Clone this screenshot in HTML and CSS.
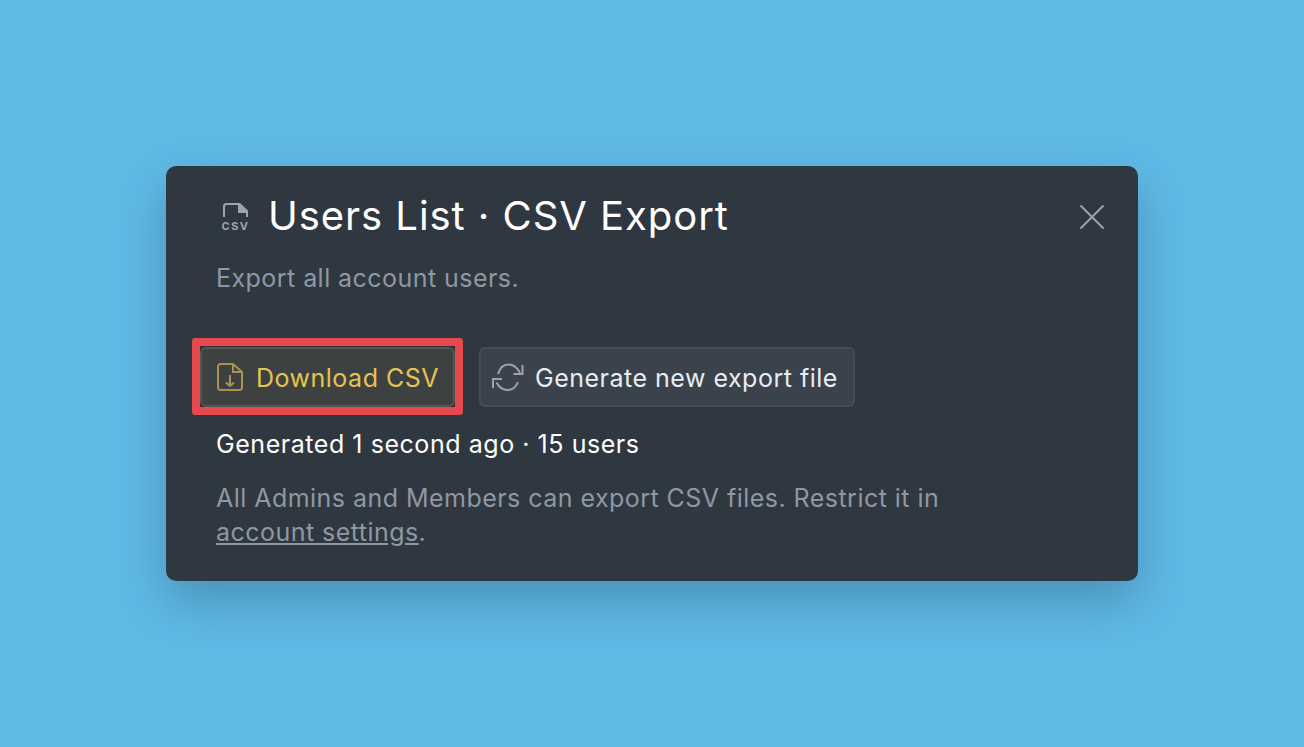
FILE: index.html
```html
<!DOCTYPE html>
<html lang="en">
<head>
    <meta charset="UTF-8">
    <meta name="viewport" content="width=device-width, initial-scale=1.0">
    <title>Users List CSV Export</title>
    <link rel="stylesheet" href="styles.css">
</head>
<body>
    <div class="modal">
        <div class="modal-header">
            <svg class="csv-icon" width="30" height="32" viewBox="0 0 30 32" fill="none">
                <path d="M4 17V6.500A2.500 2.500 0 0 1 6.500 4H19M27 12v5" stroke="#9ca3af" stroke-width="2"/>
                <path d="M18 3h2l8 7.500V13H18z" fill="#9ca3af"/>
                <text x="15.500" y="30" class="csv-label" text-anchor="middle">CSV</text>
            </svg>
            <h2>Users List · CSV Export</h2>
            <svg class="close-icon" width="26" height="26" viewBox="0 0 26 26" fill="none">
                <path d="M1.500 1.500l23 23M24.500 1.500l-23 23" stroke="#9ca3af" stroke-width="2"/>
            </svg>
        </div>
        <p class="subtitle">Export all account users.</p>

        <div class="actions">
            <div class="highlight">
                <button class="btn btn-download">
                    <svg width="28" height="30" viewBox="0 0 28 30" fill="none" stroke="currentColor" stroke-width="2">
                        <path d="M16 2H3.500A2.500 2.500 0 0 0 1 4.500v21A2.500 2.500 0 0 0 3.500 28h19a2.500 2.500 0 0 0 2.500-2.500V10z"/>
                        <path d="M16 2v8h9"/>
                        <path d="M13 13v11M9 20.500l4 3.500 4-3.500"/>
                    </svg>
                    <span class="btn-label">Download CSV</span>
                </button>
            </div>
            <button class="btn btn-generate">
                <svg width="34" height="30" viewBox="0 0 34 30" fill="none" stroke="#9ca3af" stroke-width="2">
                    <path d="M7 12C9 5 13 2.500 17.500 2.500 22 2.500 26 5 29 11"/>
                    <path d="M31.500 3v9h-9"/>
                    <path d="M27 20c-2 5-6 8-10.500 8-4.500 0-8.500-3-11-7.500"/>
                    <path d="M2 26v-9h9"/>
                </svg>
                <span class="btn-label">Generate new export file</span>
            </button>
        </div>

        <p class="status">Generated 1 second ago · 15 users</p>
        <p class="note">All Admins and Members can export CSV files. Restrict it in<br><a href="#">account settings</a>.</p>
    </div>
</body>
</html>
```

FILE: styles.css
```css
* {
    box-sizing: border-box;
}
body {
    font-family: Inter, "Liberation Sans", sans-serif;
    background-color: #60bae6;
    margin: 0;
    height: 747px;
    overflow: hidden;
    display: flex;
    align-items: center;
    justify-content: center;
}
.modal {
    width: 972px;
    height: 415px;
    background: #2f3740;
    border-radius: 10px;
    padding: 26px 26px 0 50px;
    box-shadow: 0 20px 50px rgba(20, 50, 80, 0.3);
}
.modal-header {
    display: flex;
    align-items: center;
    height: 48px;
}
.csv-icon {
    margin-left: 4px;
    margin-right: 18px;
}
.csv-label {
    font-size: 11px;
    font-weight: 700;
    letter-spacing: 1.4px;
    fill: #9ca3af;
}
.close-icon {
    margin-left: auto;
    margin-right: 7px;
    margin-top: 2px;
}
h2 {
    margin: 0;
    font-size: 40px;
    font-weight: 400;
    line-height: 48px;
    letter-spacing: 0.95px;
    color: #ffffff;
}
.subtitle {
    margin: 22px 0 0;
    font-size: 25px;
    line-height: 32px;
    letter-spacing: 0.45px;
    color: #8f97a3;
}
.actions {
    display: flex;
    align-items: center;
    gap: 16px;
    margin-top: 44px;
    margin-left: -16px;
}
.highlight {
    border: 8px solid #e5484d;
    border-radius: 3px;
    background: #2c3135;
    height: 77px;
    width: 271px;
    margin-left: -8px;
    display: flex;
    align-items: center;
}
.btn {
    height: 60px;
    display: flex;
    align-items: center;
    border-radius: 6px;
    font-family: inherit;
    font-size: 25px;
    letter-spacing: 0.5px;
    white-space: nowrap;
}
.btn-label {
    margin-top: 2px;
}
.btn-download {
    width: 255px;
    gap: 11px;
    padding: 0 0 0 15px;
    background: #3e4142;
    border: 2px solid #54564f;
    color: #e5c44f;
}
.btn-download svg {
    color: #a8934f;
}
.btn-generate {
    width: 376px;
    gap: 10px;
    padding: 0 0 0 10px;
    background: #3a424c;
    border: 2px solid #454c57;
    color: #e8ecf3;
}
.status {
    margin: 12px 0 0;
    font-size: 25px;
    line-height: 34px;
    letter-spacing: 0.55px;
    color: #ffffff;
}
.note {
    margin: 20px 0 0;
    font-size: 25px;
    line-height: 34px;
    letter-spacing: 0.46px;
    color: #8f97a3;
}
.note a {
    color: #8f97a3;
}
```
